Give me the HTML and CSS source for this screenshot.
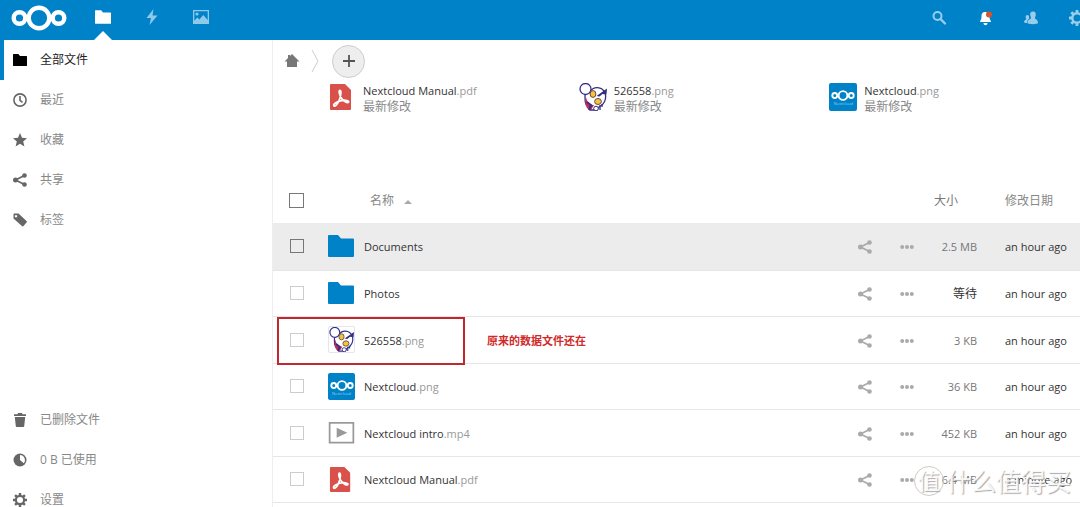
FILE: index.html
```html
<!DOCTYPE html>
<html lang="zh-CN">
<head>
<meta charset="utf-8">
<title>Nextcloud</title>
<link rel="stylesheet" href="styles.css">
</head>
<body>
<svg class="defs" aria-hidden="true">
  <symbol id="folder" viewBox="0 0 26 22"><path d="M1 0h9l3 3.500h12a1 1 0 0 1 1 1V21a1 1 0 0 1-1 1H1a1 1 0 0 1-1-1V1a1 1 0 0 1 1-1z"/></symbol>
  <symbol id="share" viewBox="0 0 14 14"><path d="M11.500 2.500L2.500 7l9 4.500" fill="none" stroke="currentColor" stroke-width="1.700"/><circle cx="2.500" cy="7" r="2.500"/><circle cx="11.500" cy="2.500" r="2.300"/><circle cx="11.500" cy="11.500" r="2.300"/></symbol>
  <symbol id="more" viewBox="0 0 14 14"><circle cx="2.200" cy="7" r="2"/><circle cx="7" cy="7" r="2"/><circle cx="11.800" cy="7" r="2"/></symbol>
  <symbol id="gear" viewBox="0 0 16 16"><circle cx="8" cy="8" r="4.700" fill="none" stroke="currentColor" stroke-width="2.400"/><path d="M8 0v3M8 13v3M0 8h3M13 8h3M2.340 2.340l2.200 2.200M11.460 11.460l2.200 2.200M2.340 13.660l2.200-2.200M11.460 4.540l2.200-2.200" stroke="currentColor" stroke-width="2.800"/></symbol>
  <symbol id="rings" viewBox="0 0 56 26"><g fill="none" stroke="currentColor" stroke-width="4.400"><circle cx="28" cy="13" r="10.300"/><circle cx="8.500" cy="13" r="5.800"/><circle cx="47.500" cy="13" r="5.800"/></g></symbol>
  <symbol id="pdf" viewBox="0 0 28 28"><path d="M3 1h14l6 6v19a1 1 0 0 1-1 1H3a1 1 0 0 1-1-1V2a1 1 0 0 1 1-1z" fill="#d9514b"/><path d="M12 7.500c-1.600 0-.6 4.500 1.300 7.500 2.200 3.400 6 5.300 7.200 4.200 1.200-1.300-3-2.400-6.800-1.700-4.400.8-8.600 3.500-7.900 5.200.7 1.700 4-1.500 5.500-5.700 1.500-4 2.300-9.500.7-9.500z" fill="none" stroke="#fff" stroke-width="1.800"/></symbol>
  <symbol id="cartoon" viewBox="0 0 28 28"><path d="M6 12c0 6 0 10 3 12l2 3h7l2-3c5-2 8-8 6-14-3-7-12-7-15-1z" fill="#fff" stroke="#352f83" stroke-width="1.300"/><circle cx="6.500" cy="6" r="5.500" fill="#fff" stroke="#352f83" stroke-width="1.300"/><path d="M7 14c1 6 5 8 8 8l-3 5-3-1c-3-3-3-8-2-12z" fill="#c32a55"/><path d="M8 19l5 4M12 22l-2 5" stroke="#352f83" stroke-width="2"/><ellipse cx="14" cy="11" rx="2.900" ry="3.400" fill="#f4c43e" stroke="#6a4b46"/><ellipse cx="19" cy="18.500" rx="3.400" ry="3" fill="#f4c43e" stroke="#6a4b46"/><path d="M28 5.500L17.500 13l3 .5 3-2.500 4 .5z" fill="#352f83"/><circle cx="17" cy="25.500" r="2.300" fill="#fff" stroke="#352f83"/><path d="M21 22v5M23 21v3" stroke="#352f83" stroke-width="1.300"/></symbol>
  <symbol id="video" viewBox="0 0 28 28"><rect x="1.700" y="4" width="24.600" height="20.500" fill="#fff" stroke="#999" stroke-width="1.800"/><path d="M9 9l11 5.300L9 19.500z" fill="#999"/></symbol>
</svg>

<header class="topbar">
  <a class="logo" href="#" aria-label="Nextcloud"><svg><use href="#rings"/></svg></a>
  <nav class="apps">
    <a class="app current" href="#" aria-label="文件"><svg><use href="#folder"/></svg></a>
    <a class="app" href="#" aria-label="动态"><svg viewBox="0 0 16 16"><path d="M9.500 0L2.500 9H7l-1.500 7 8-9.500H8.500z"/></svg></a>
    <a class="app" href="#" aria-label="图库"><svg viewBox="0 0 16 16"><path d="M0 1h16v14H0zM1.300 2.300v9.500l3-3.300 2 2 4-4.500 4.400 5V2.300z" fill-rule="evenodd"/><circle cx="4" cy="5" r="1.600"/></svg></a>
  </nav>
  <div class="tools">
    <button aria-label="搜索"><svg viewBox="0 0 16 16"><circle cx="6.500" cy="6" r="4" fill="none" stroke="currentColor" stroke-width="2"/><path d="M9.500 9l4.500 4.500" stroke="currentColor" stroke-width="2.400" stroke-linecap="round"/></svg></button>
    <button class="alert" aria-label="通知"><svg viewBox="0 0 16 16"><path d="M8 2C5 2 4.500 4.500 4.500 7S3 10.500 3 12h11c0-1.500-1.500-2.500-1.500-5S11 2 8 2zM6.500 13h4c0 3-4 3-4 0z"/><circle cx="12" cy="4.500" r="3" fill="#d9532c"/></svg></button>
    <button aria-label="联系人"><svg viewBox="0 0 16 16"><path d="M10 1.500c-2.200 0-3 1.500-2.800 3.300.1 1.500.8 2.200.8 3.500C7.500 9.500 4.500 9.500 4.500 13c0 1.500 10.500 1.500 10.500 0 0-3.500-2.700-3.500-3-4.700 0-1.300.7-2 .8-3.500.2-1.800-.6-3.300-2.800-3.300z"/><path d="M4.500 5C3 5 2.500 6 2.700 7.200c.1 1 .6 1.300.5 2C2.700 10 1 10 1 12.300c0 .7 3 .9 3 .7 0-2.500 1-3.700 2.300-4.300C6 8 6.500 5 4.500 5z"/></svg></button>
    <button aria-label="设置"><svg><use href="#gear"/></svg></button>
  </div>
</header>

<div class="layout">
  <aside class="sidebar">
    <nav class="menu">
      <a class="item active" href="#"><svg><use href="#folder"/></svg>全部文件</a>
      <a class="item" href="#"><svg viewBox="0 0 14 14"><circle cx="7" cy="7" r="6.100" fill="none" stroke="currentColor" stroke-width="1.600"/><path d="M7 3v4.300l2.500 2" fill="none" stroke="currentColor" stroke-width="1.600"/></svg>最近</a>
      <a class="item" href="#"><svg viewBox="0 0 14 14"><path d="M7 0l2 4.800 5 .4-3.800 3.300 1.200 5L7 10.800l-4.400 2.700 1.200-5L0 5.200l5-.4z"/></svg>收藏</a>
      <a class="item" href="#"><svg><use href="#share"/></svg>共享</a>
      <a class="item" href="#"><svg viewBox="0 0 14 14"><path d="M1.500.5h4l8 7.500c.6.600.6 1 0 1.600l-3 3.400c-.6.600-1 .6-1.600 0L.5 5.500v-4c0-.6.400-1 1-1zM3 2a1.200 1.200 0 1 0 .01 0z" fill-rule="evenodd"/></svg>标签</a>
    </nav>
    <nav class="menu bottom">
      <a class="item" href="#"><svg viewBox="0 0 14 14"><path d="M5 0h4l.5 1.300H13V3H1V1.300h3.500zM1.800 4h10.400l-1 9.200c-.1.500-.3.800-.8.800H3.600c-.5 0-.7-.3-.8-.8z"/></svg>已删除文件</a>
      <a class="item" href="#"><svg viewBox="0 0 14 14"><circle cx="7" cy="7" r="6.500"/><path d="M7 2a5 5 0 0 1 3.800 8.200L7 7z" fill="#fff"/></svg>0 B 已使用</a>
      <a class="item" href="#"><svg><use href="#gear"/></svg>设置</a>
    </nav>
  </aside>

  <main class="content">
    <div class="crumbs">
      <a class="home" href="#" aria-label="主页"><svg viewBox="0 0 16 16"><path d="M8 1l7.500 7.500H13V14H3V8.500H.5L4 5V2h2v1z"/></svg></a>
      <svg class="sep" viewBox="0 0 8 22"><path d="M1 0l6 11-6 11" fill="none" stroke="#ccc"/></svg>
      <button class="add" aria-label="新建"><svg viewBox="0 0 12 12"><path d="M6 0v12M0 6h12" stroke="#555" stroke-width="1.800"/></svg></button>
    </div>
    <section class="recent">
      <a class="card" href="#"><svg class="thumb"><use href="#pdf"/></svg><span>Nextcloud Manual<i>.pdf</i><small>最新修改</small></span></a>
      <a class="card" href="#"><svg class="thumb"><use href="#cartoon"/></svg><span>526558<i>.png</i><small>最新修改</small></span></a>
      <a class="card" href="#"><span class="thumb brand"><svg><use href="#rings"/></svg><b>Nextcloud</b></span><span>Nextcloud<i>.png</i><small>最新修改</small></span></a>
    </section>
    <table class="files">
      <thead>
        <tr><th class="check"><input type="checkbox" aria-label="全选"></th><th class="pic"></th><th class="name">名称<span class="sort"></span></th><th class="act"></th><th class="act"></th><th class="size">大小</th><th class="date">修改日期</th></tr>
      </thead>
      <tbody>
        <tr class="hover"><td class="check"><input type="checkbox" aria-label="Documents"></td><td class="pic"><svg class="dir"><use href="#folder"/></svg></td><td>Documents</td><td><button aria-label="共享"><svg><use href="#share"/></svg></button></td><td><button aria-label="更多"><svg><use href="#more"/></svg></button></td><td class="size">2.5 MB</td><td>an hour ago</td></tr>
        <tr><td class="check"><input type="checkbox" aria-label="Photos"></td><td class="pic"><svg class="dir"><use href="#folder"/></svg></td><td>Photos</td><td><button aria-label="共享"><svg><use href="#share"/></svg></button></td><td><button aria-label="更多"><svg><use href="#more"/></svg></button></td><td class="size pending">等待</td><td>an hour ago</td></tr>
        <tr><td class="check marked"><input type="checkbox" aria-label="526558.png"></td><td class="pic"><svg class="thumb framed"><use href="#cartoon"/></svg></td><td>526558<i>.png</i><span class="note">原来的数据文件还在</span></td><td><button aria-label="共享"><svg><use href="#share"/></svg></button></td><td><button aria-label="更多"><svg><use href="#more"/></svg></button></td><td class="size">3 KB</td><td>an hour ago</td></tr>
        <tr><td class="check"><input type="checkbox" aria-label="Nextcloud.png"></td><td class="pic"><span class="thumb brand"><svg><use href="#rings"/></svg><b>Nextcloud</b></span></td><td>Nextcloud<i>.png</i></td><td><button aria-label="共享"><svg><use href="#share"/></svg></button></td><td><button aria-label="更多"><svg><use href="#more"/></svg></button></td><td class="size">36 KB</td><td>an hour ago</td></tr>
        <tr><td class="check"><input type="checkbox" aria-label="Nextcloud intro.mp4"></td><td class="pic"><svg class="thumb"><use href="#video"/></svg></td><td>Nextcloud intro<i>.mp4</i></td><td><button aria-label="共享"><svg><use href="#share"/></svg></button></td><td><button aria-label="更多"><svg><use href="#more"/></svg></button></td><td class="size">452 KB</td><td>an hour ago</td></tr>
        <tr><td class="check"><input type="checkbox" aria-label="Nextcloud Manual.pdf"></td><td class="pic"><svg class="thumb"><use href="#pdf"/></svg></td><td>Nextcloud Manual<i>.pdf</i></td><td><button aria-label="共享"><svg><use href="#share"/></svg></button></td><td><button aria-label="更多"><svg><use href="#more"/></svg></button></td><td class="size">6.4 MB</td><td>a minute ago</td></tr>
      </tbody>
    </table>
  </main>
</div>
<div class="watermark"><span class="seal">值</span>什么值得买</div>
</body>
</html>
```

FILE: styles.css
```css
*, *::before, *::after { box-sizing: border-box; }
body {
  margin: 0;
  height: 100vh;
  overflow: hidden;
  display: flex;
  flex-direction: column;
  position: relative;
  background: #fff;
  color: #333;
  font: 12px/16px "Open Sans", "Noto Sans CJK SC", sans-serif;
}
.defs { position: absolute; width: 0; height: 0; }
svg { display: block; fill: currentColor; }
a { color: inherit; text-decoration: none; }
i { font-style: normal; color: #999; }
button { border: 0; padding: 0; background: none; color: inherit; display: block; }

.topbar {
  flex: none;
  display: flex;
  height: 40px;
  overflow: hidden;
  background: #0082c9;
  color: #fff;
}
.logo { padding: 5px 0 0 11px; }
.logo svg { width: 56px; height: 26px; }
.apps { display: flex; flex: 1; padding-left: 11px; }
.app {
  width: 49px;
  padding: 9px 16px 0;
  color: #8fc9ea;
  display: flex;
  flex-direction: column;
  align-items: center;
}
.app svg { width: 16px; height: 16px; flex: none; }
.app.current { color: #fff; }
.app.current::after {
  content: "";
  margin-top: 6px;
  border: 9px solid transparent;
  border-top: 0;
  border-bottom-color: #fff;
}
.tools { display: flex; gap: 30px; color: #99cdea; margin-right: -5px; }
.tools svg { width: 16px; height: 16px; }
.tools button { height: 36px; }
.tools .alert { color: #fff; }

.layout { flex: 1; display: flex; min-height: 0; }
.sidebar {
  flex: none;
  width: 273px;
  border-right: 1px solid #eee;
  display: flex;
  flex-direction: column;
  justify-content: space-between;
}
.bottom { margin-bottom: -13px; }
.item {
  display: flex;
  align-items: center;
  gap: 13px;
  height: 40px;
  padding: 0 0 0 13px;
  color: #888;
}
.item svg { width: 14px; height: 14px; color: #666; }
.item.active { color: #222; border-left: 4px solid #0082c9; padding-left: 9px; }
.item.active svg { color: #000; }

.content { flex: 1; min-width: 0; }
.crumbs { display: flex; align-items: center; height: 42px; padding-left: 11px; }
.home svg { width: 16px; height: 16px; color: #777; }
.sep { width: 8px; height: 22px; margin: 0 13px 0 11px; }
.add {
  display: grid;
  place-items: center;
  width: 33px;
  height: 33px;
  border: 1px solid #ccc;
  border-radius: 50%;
  background: #eee;
}
.add svg { width: 12px; height: 12px; }
.recent {
  display: grid;
  grid-template-columns: repeat(3, 1fr);
  height: 95px;
  padding: 1px 0 0 55px;
  font-size: 11px;
}
.card { display: flex; align-items: flex-start; gap: 7px; }
.card small { display: block; font-size: 12px; line-height: 15px; color: #888; }
.thumb { width: 28px; height: 28px; flex: none; }
.brand {
  display: flex;
  flex-direction: column;
  align-items: center;
  padding-top: 7px;
  border-radius: 2px;
  background: #0082c9;
  color: #fff;
}
.brand svg { width: 24px; height: 11px; }
.brand b { font-size: 4px; line-height: 6px; font-weight: 400; color: #8fd0f2; }

.files { width: 100%; border-collapse: collapse; table-layout: fixed; }
.files th { height: 46px; padding: 2px 0 0; font-weight: 400; color: #888; text-align: left; }
.files td {
  height: 47px;
  padding: 2px 0 0;
  border-bottom: 1px solid #e6e6e6;
  white-space: nowrap;
  font-size: 11px;
}
.files tbody tr:nth-child(even) td { height: 46px; }
.files .check { width: 55px; padding: 0 0 0 17px; }
.files .pic { width: 36px; padding: 0; }
.files .act { width: 42px; }
.files .size { width: 77px; text-align: right; color: #777; }
.files th.size { padding-right: 47px; }
.files td.size { padding-right: 28px; }
.files td.pending { color: #333; font-size: 12px; }
.files .date { width: 75px; }
.files .name { padding-left: 6px; }
.sort {
  display: inline-block;
  margin-left: 10px;
  border: 4px solid transparent;
  border-top: 0;
  border-bottom-color: #aaa;
  vertical-align: middle;
}
.files input {
  appearance: none;
  display: block;
  width: 14px;
  height: 14px;
  margin: 0;
  border: 1px solid #ccc;
  background: #fff;
}
.files th.check { padding-left: 16px; }
.files th input { width: 15px; height: 15px; border-color: #777; }
.files .hover { background: #ececec; }
.files .hover input { border-color: #777; background: none; }
.dir { width: 26px; height: 22px; color: #0082c9; }
.files button { margin-left: 14px; color: #aaa; }
.files button svg { width: 14px; height: 14px; }
.files .thumb { width: 27px; height: 27px; }
.framed { border: 1px solid #e2e6ee; border-radius: 2px; }
.marked { position: relative; }
.marked::after {
  content: "";
  position: absolute;
  left: 4px;
  top: 0;
  width: 188px;
  height: 48px;
  border: 2px solid #c1272d;
  pointer-events: none;
}
.note {
  margin-left: 63px;
  color: #d02a2a;
  font: bold 11px/16px "Liberation Serif", "Noto Sans CJK SC", serif;
}

.watermark {
  position: absolute;
  right: 9px;
  bottom: 11px;
  display: flex;
  align-items: center;
  gap: 2px;
  color: rgba(255, 255, 255, .9);
  font-size: 25px;
  line-height: 30px;
  text-shadow: 1px 1px 1px #aaa;
}
.seal {
  width: 30px;
  height: 30px;
  border: 1px solid #ccc;
  border-radius: 50%;
  font-size: 22px;
  line-height: 26px;
  text-align: center;
}
```
